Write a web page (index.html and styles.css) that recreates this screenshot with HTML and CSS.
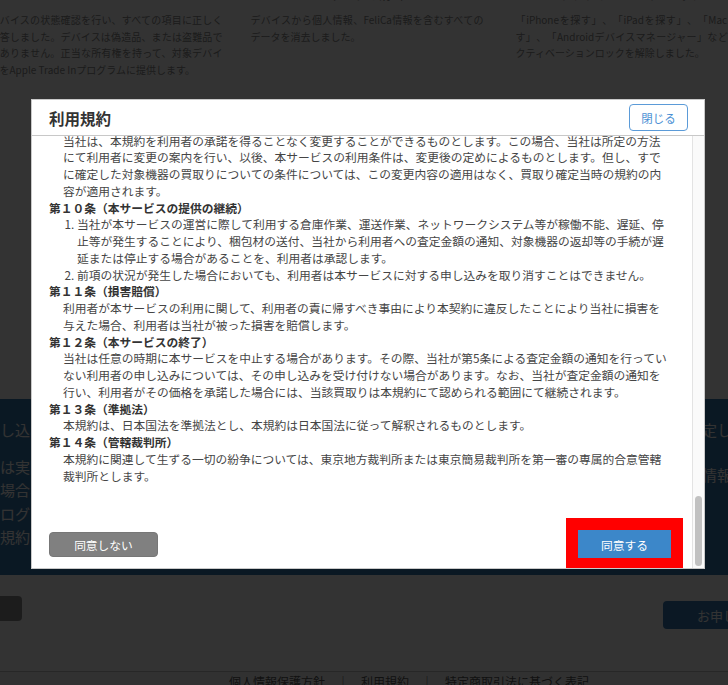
FILE: index.html
```html
<!DOCTYPE html>
<html lang="ja">
<head>
<meta charset="utf-8">
<title>利用規約</title>
<link rel="stylesheet" href="styles.css">
</head>
<body>
<div class="page">
  <section class="consent-cols">
    <div class="col">
      <h3 class="col-head">&nbsp;</h3>
      <p>デバイスの状態確認を行い、すべての項目に正しく回答しました。デバイスは偽造品、または盗難品ではありません。正当な所有権を持って、対象デバイスをApple Trade Inプログラムに提供します。</p>
    </div>
    <div class="col">
      <h3 class="col-head">データの消去</h3>
      <p>デバイスから個人情報、FeliCa情報を含むすべてのデータを消去しました。</p>
    </div>
    <div class="col">
      <h3 class="col-head">アクティベーションロック</h3>
      <p>「iPhoneを探す」、「iPadを探す」、「Macを探す」、「Androidデバイスマネージャー」などのアクティベーションロックを解除しました。</p>
    </div>
  </section>

  <section class="band">
    <div class="band-col band-left">
      <h3 class="band-title">お申し込みの注意事項</h3>
      <p class="band-text">査定は実際の端末の状態により変動します。<br>その場合、お客様にご連絡いたします。<br>必ずログアウトしてから送付してください。<br>利用規約に同意の上お申し込みください。</p>
    </div>
    <div class="band-col band-right">
      <h3 class="band-title">再査定した場合</h3>
      <p class="band-text">個人情報は適切に取り扱います。</p>
    </div>
  </section>

  <div class="actions">
    <button class="btn-back" type="button">戻る</button>
    <button class="btn-apply" type="button">お申し込み</button>
  </div>

  <footer class="site-footer">
    <p>個人情報保護方針　｜　利用規約　｜　特定商取引法に基づく表記</p>
  </footer>
</div>

<div class="overlay">
  <div class="modal" role="dialog" aria-labelledby="modal-title">
    <div class="modal-header">
      <h2 class="modal-title" id="modal-title">利用規約</h2>
      <button class="btn-close" type="button">閉じる</button>
    </div>
    <div class="modal-main">
      <div class="modal-body">
        <div class="terms">
          <p class="clause">当社は、本規約を利用者の承諾を得ることなく変更することができるものとします。この場合、当社は所定の方法にて利用者に変更の案内を行い、以後、本サービスの利用条件は、変更後の定めによるものとします。但し、すでに確定した対象機器の買取りについての条件については、この変更内容の適用はなく、買取り確定当時の規約の内容が適用されます。</p>
          <h3 class="article">第１０条（本サービスの提供の継続）</h3>
          <ol class="clause-list">
            <li>当社が本サービスの運営に際して利用する倉庫作業、運送作業、ネットワークシステム等が稼働不能、遅延、停止等が発生することにより、梱包材の送付、当社から利用者への査定金額の通知、対象機器の返却等の手続が遅延または停止する場合があることを、利用者は承認します。</li>
            <li>前項の状況が発生した場合においても、利用者は本サービスに対する申し込みを取り消すことはできません。</li>
          </ol>
          <h3 class="article">第１１条（損害賠償）</h3>
          <p class="clause">利用者が本サービスの利用に関して、利用者の責に帰すべき事由により本契約に違反したことにより当社に損害を与えた場合、利用者は当社が被った損害を賠償します。</p>
          <h3 class="article">第１２条（本サービスの終了）</h3>
          <p class="clause">当社は任意の時期に本サービスを中止する場合があります。その際、当社が第5条による査定金額の通知を行っていない利用者の申し込みについては、その申し込みを受け付けない場合があります。なお、当社が査定金額の通知を行い、利用者がその価格を承諾した場合には、当該買取りは本規約にて認められる範囲にて継続されます。</p>
          <h3 class="article">第１３条（準拠法）</h3>
          <p class="clause">本規約は、日本国法を準拠法とし、本規約は日本国法に従って解釈されるものとします。</p>
          <h3 class="article">第１４条（管轄裁判所）</h3>
          <p class="clause">本規約に関連して生ずる一切の紛争については、東京地方裁判所または東京簡易裁判所を第一審の専属的合意管轄裁判所とします。</p>
        </div>
        <div class="modal-actions">
          <button class="btn-disagree" type="button">同意しない</button>
          <button class="btn-agree" type="button">同意する</button>
        </div>
      </div>
      <div class="scrollbar" aria-hidden="true"><div class="scroll-thumb"></div></div>
    </div>
  </div>
</div>
</body>
</html>
```

FILE: styles.css
```css
* { box-sizing: border-box; }

html, body {
  margin: 0;
  padding: 0;
}

body {
  width: 728px;
  height: 685px;
  overflow: hidden;
  background: #ffffff;
  font-family: "Noto Sans CJK JP", "Noto Sans", sans-serif;
  text-autospace: no-autospace;
  text-spacing-trim: space-all;
  color: #333;
}

/* ---------- page behind the dialog ---------- */
.page {
  width: 820px;
  margin: -14px 0 0 -31px;
}

.consent-cols {
  display: grid;
  grid-template-columns: 261px 265px 233px;
  padding-left: 20.5px;
  min-height: 413px;
}

.col-head {
  margin: 0 0 8px;
  width: 233px;
  font-size: 12px;
  line-height: 18px;
  font-weight: normal;
  text-align: center;
  color: #7a7a7a;
}

.col p {
  margin: 0;
  width: 233px;
  font-size: 10px;
  line-height: 16.67px;
  text-align: justify;
  color: #8a8a8a;
}

.band {
  display: flex;
  justify-content: space-between;
  height: 176px;
  padding: 20px 0 0 1px;
  background: #3678ad;
  color: #ffffff;
}

.band-left {
  width: 300px;
}

.band-right {
  width: 117px;
}

.band-title {
  margin: 0 0 14px;
  font-size: 15px;
  line-height: 22px;
  font-weight: normal;
  white-space: nowrap;
}

.band-right .band-title {
  margin-bottom: 22px;
}

.band-text {
  margin: 0;
  font-size: 15px;
  line-height: 23.3px;
  white-space: nowrap;
}

.actions {
  display: flex;
  justify-content: space-between;
  align-items: flex-start;
  height: 96px;
  padding-top: 21px;
}

.btn-back {
  width: 53px;
  height: 25px;
  border: none;
  border-radius: 4px;
  background: #8e8e8e;
  color: #fff;
  font: inherit;
  font-size: 13px;
  text-indent: -30px;
}

.btn-apply {
  width: 121px;
  height: 28px;
  margin-top: 5px;
  margin-right: 5px;
  border: none;
  border-radius: 4px;
  background: #3778b2;
  color: #ffffff;
  font: inherit;
  font-size: 13px;
  text-align: left;
  padding-left: 34px;
  white-space: nowrap;
}

.site-footer {
  border-top: 1px solid #c4c4c4;
  background: #f2f2f2;
  padding-top: 1px;
  text-align: center;
}

.site-footer p {
  margin: 0 0 0 60px;
  font-size: 12px;
  line-height: 18px;
  color: #555;
}

/* ---------- dialog ---------- */
.overlay {
  position: fixed;
  inset: 0;
  background: rgba(0, 0, 0, 0.8);
}

.modal {
  display: flex;
  flex-direction: column;
  width: 674px;
  height: 470px;
  margin: 99px 0 0 31px;
  border: 1px solid #c9c9c9;
  background: #ffffff;
}

.modal-header {
  flex: none;
  display: flex;
  align-items: center;
  justify-content: space-between;
  height: 36px;
  padding: 0 16px 0 17px;
  border-bottom: 1px solid #c8c8c8;
}

.modal-title {
  margin: 0;
  font-size: 15.5px;
  line-height: 20px;
  font-weight: 600;
  color: #333;
}

.btn-close {
  width: 59px;
  height: 27px;
  padding: 0;
  border: 1px solid #5b9bd8;
  border-radius: 4px;
  background: #ffffff;
  color: #4a8fd4;
  font: inherit;
  font-size: 11.5px;
  cursor: pointer;
}

.modal-main {
  flex: 1;
  display: flex;
  min-height: 0;
}

.modal-body {
  flex: 1;
  min-width: 0;
  overflow: hidden;
  display: flex;
  flex-direction: column;
  justify-content: flex-end;
  padding: 0 19px 10px 17px;
}

.terms {
  flex: none;
  margin-right: 4px;
  font-size: 11.76px;
  line-height: 16.75px;
  color: #454545;
}

.clause {
  margin: 0;
  padding-left: 14px;
}

.article {
  margin: 0;
  font-size: inherit;
  font-weight: bold;
  color: #333;
}

.clause-list {
  margin: 0;
  padding-left: 28px;
}

.modal-actions {
  flex: none;
  display: flex;
  align-items: center;
  justify-content: space-between;
  margin: 45.6px 2px 0 0;
}

.btn-disagree {
  width: 109px;
  height: 25px;
  padding: 0;
  border: 1px solid #777;
  border-radius: 4px;
  background: #808080;
  color: #ffffff;
  font: inherit;
  font-size: 11.75px;
}

.btn-agree {
  width: 93px;
  height: 28px;
  padding: 0;
  border: none;
  background: #3c87c9;
  color: #ffffff;
  font: inherit;
  font-size: 11.75px;
  box-shadow: 0 0 0 12px #ff0000;
}

.scrollbar {
  flex: none;
  width: 12px;
  display: flex;
  flex-direction: column;
  justify-content: flex-end;
  align-items: center;
  padding-bottom: 2px;
  border-left: 1px solid #e3e3e3;
  background: #fafafa;
}

.scroll-thumb {
  width: 7px;
  height: 70px;
  border-radius: 4px;
  background: #c1c1c1;
}
```
